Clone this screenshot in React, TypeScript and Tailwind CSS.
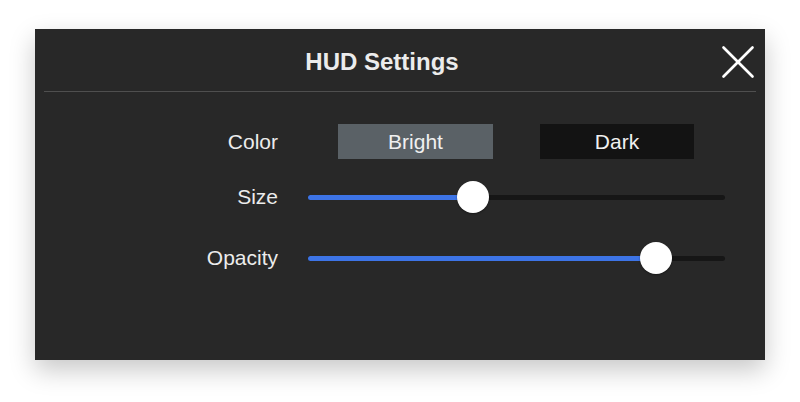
import { X } from 'lucide-react'

interface SliderProps {
    value: number
}

function Slider({ value }: SliderProps) {
    return (
        <div className="relative h-8 w-[417px] flex items-center">
            <div className="h-[5px] w-full rounded-full bg-[#161616]">
                <div className="h-full rounded-full bg-[#3d74e6]" style={{ width: `${value}%` }} />
            </div>
            <div
                className="absolute top-0 h-8 w-8 -ml-4 rounded-full bg-white shadow-[0_1px_2px_rgba(0,0,0,0.4)]"
                style={{ left: `${value}%` }}
            />
        </div>
    )
}

export default function App() {
    return (
        <div className="min-h-[402px] bg-white pt-[29px] pl-[35px] font-['Liberation_Sans',Arial,sans-serif]">
            <div className="w-[730px] h-[331px] bg-[#282828] shadow-[0_10px_24px_rgba(0,0,0,0.22)] flex flex-col">
                <header className="flex items-center h-[63px] pt-[4px] mx-[9px] border-b border-[#4f4f4f]">
                    <h1 className="flex-1 text-center text-[24px] font-bold text-[#ececec] pr-[2px]">HUD Settings</h1>
                    <button className="w-[32px] h-[34px] mr-[2px] text-white flex items-center justify-center">
                        <X size={58} strokeWidth={1.1} className="shrink-0" />
                    </button>
                </header>

                <div className="grid grid-cols-[243px_1fr] gap-x-[30px] items-center pt-[32px] text-[21px] text-[#ececec]">
                    <span className="text-right h-[35px] leading-[35px]">Color</span>
                    <div className="flex gap-[47px] pl-[30px]">
                        <button className="w-[155px] h-[35px] bg-[#5a6166] text-[#f0f0f0]">Bright</button>
                        <button className="w-[154px] h-[35px] bg-[#131313] text-[#f0f0f0]">Dark</button>
                    </div>

                    <span className="text-right mt-[22px]">Size</span>
                    <div className="mt-[22px]">
                        <Slider value={39.6} />
                    </div>

                    <span className="text-right mt-[29px]">Opacity</span>
                    <div className="mt-[29px]">
                        <Slider value={83.5} />
                    </div>
                </div>
            </div>
        </div>
    )
}
